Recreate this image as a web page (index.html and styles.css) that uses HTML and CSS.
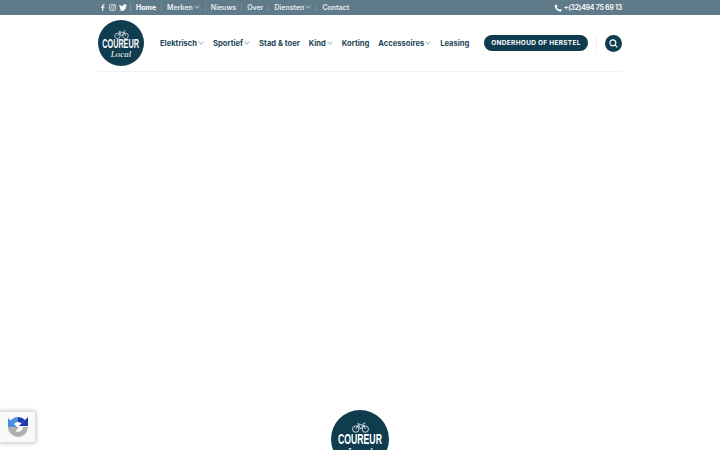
FILE: index.html
```html
<!DOCTYPE html>
<html>
<head>
    <title>Coureur Local</title>
    <link rel="stylesheet" href="styles.css">
</head>
<body>
    <div class="topbar">
        <div class="container topbar-row">
            <div class="social">
                <svg class="ico" width="4" height="7" viewBox="0 0 5 8"><path d="M1.400 8V4.400H.2V3h1.200V2C1.400.8 2.100.1 3.200.1c.5 0 1 0 1.100.1v1.200h-.7c-.6 0-.7.3-.7.7V3h1.400l-.2 1.400H2.900V8z" fill="#fff"/></svg>
                <svg class="ico" width="7" height="7" viewBox="0 0 8 8" fill="none" stroke="#fff" stroke-width=".8"><rect x=".5" y=".5" width="7" height="7" rx="2"/><circle cx="4" cy="4" r="1.600"/><circle cx="6" cy="2" r=".3"/></svg>
                <svg class="ico" width="8" height="7" viewBox="0 0 24 20"><path d="M24 2.400c-.9.400-1.800.7-2.800.8 1-.6 1.800-1.600 2.200-2.700-1 .6-2 1-3.100 1.200A4.900 4.900 0 0 0 11.900 6.200C7.800 6 4.200 4 1.700.9.400 3.100 1 6 3.200 7.500c-.8 0-1.600-.2-2.200-.6 0 2.300 1.600 4.400 3.900 4.900-.7.200-1.500.2-2.200.1.600 2 2.400 3.400 4.600 3.400A9.900 9.900 0 0 1 0 17.800 14 14 0 0 0 21.500 5.400c1-.7 1.800-1.600 2.500-3z" fill="#fff"/></svg>
            </div>
            <nav class="topnav">
                <a class="active">Home</a>
                <a>Merken<span class="chev"></span></a>
                <a>Nieuws</a>
                <a>Over</a>
                <a>Diensten<span class="chev"></span></a>
                <a>Contact</a>
            </nav>
            <div class="phone">
                <svg width="8" height="8" viewBox="0 0 24 24"><path d="M6.600 1.500 2.500 3C1 6 2.500 12 7 16.800s10.500 7 14.500 5.500l2-4.300-5.500-3.500-2.800 2.500c-2-.8-6-5-7-7.500L10.500 7z" fill="#fff"/></svg>
                <span>+(32)494 75 69 13</span>
            </div>
        </div>
    </div>

    <header class="container header">
        <div class="logo">
            <svg class="bike" width="15" height="9" viewBox="0 0 32 20" fill="none" stroke="#fff" stroke-width="1.500"><circle cx="7" cy="13" r="6"/><circle cx="25" cy="13" r="6"/><path d="M7 13 12 5h10l3 8M12 5l4 8 6-8M10 3h4M21 2h4"/></svg>
            <div class="logo-name">COUREUR</div>
            <div class="logo-sub">Local</div>
        </div>
        <nav class="mainnav">
            <a>Elektrisch<span class="chev dark"></span></a>
            <a>Sportief<span class="chev dark"></span></a>
            <a>Stad &amp; toer</a>
            <a>Kind<span class="chev dark"></span></a>
            <a>Korting</a>
            <a>Accessoires<span class="chev dark"></span></a>
            <a>Leasing</a>
        </nav>
        <a class="cta">ONDERHOUD OF HERSTEL</a>
        <span class="sep"></span>
        <a class="search">
            <svg width="9" height="9" viewBox="0 0 10 10" fill="none" stroke="#fff" stroke-width="1.300"><circle cx="4.300" cy="4.300" r="3.300"/><path d="m6.800 6.800 2.600 2.600"/></svg>
        </a>
    </header>

    <main class="content"></main>

    <footer class="footer">
        <div class="logo logo-big">
            <svg class="bike" width="17" height="11" viewBox="0 0 32 20" fill="none" stroke="#fff" stroke-width="1.500"><circle cx="7" cy="13" r="6"/><circle cx="25" cy="13" r="6"/><path d="M7 13 12 5h10l3 8M12 5l4 8 6-8M10 3h4M21 2h4"/></svg>
            <div class="logo-name">COUREUR</div>
            <div class="logo-sub">Local</div>
        </div>
    </footer>

    <div class="recaptcha">
        <svg width="20" height="20" viewBox="0 0 20 20" fill="none" stroke-width="5">
            <path d="M10 2.500A7.500 7.500 0 0 1 15.300 4.700" stroke="#1c3aa9"/>
            <path d="M20 0v9h-9z" fill="#1c3aa9" stroke="none"/>
            <path d="M10 2.500A7.500 7.500 0 0 0 2.500 10" stroke="#4a90e2"/>
            <path d="M0 1v9h9z" fill="#4a90e2" stroke="none"/>
            <path d="M2.500 10A7.500 7.500 0 0 0 17.500 10" stroke="#b0b0b0"/>
            <path d="M3 10h8l-4 5z" fill="#b0b0b0" stroke="none"/>
        </svg>
    </div>
</body>
</html>
```

FILE: styles.css
```css
html, body { margin: 0; height: 450px; overflow: hidden; }
body { font-family: Inter, "Liberation Sans", sans-serif; background: #fff; color: #1b4455; }
a { display: block; }
.container { width: 524px; margin: 0 auto; }

.topbar { background: #5f7a88; height: 15px; }
.topbar-row { display: flex; align-items: center; height: 15px; color: #fff; font-size: 7px; font-weight: 600; }
.social { display: flex; align-items: center; gap: 3.500px; margin-left: 3px; padding-right: 3px; border-right: 1px solid #7b929e; height: 9px; }
.ico { display: block; }
.topnav { display: flex; align-items: center; }
.topnav a { padding: 0 5px; border-left: 1px solid #718a97; color: #e6ecef; line-height: 9px; white-space: nowrap; }
.topnav a:first-child { border-left: 0; }
.topnav .active { color: #fff; font-weight: 700; }
.chev { display: inline-block; width: 3px; height: 3px; border-right: 1px solid #a9bac3; border-bottom: 1px solid #a9bac3; transform: rotate(45deg); margin: 0 1px 2px 2px; }
.chev.dark { border-color: #b5bfc5; }
.phone { margin-left: auto; display: flex; align-items: center; gap: 2px; white-space: nowrap; letter-spacing: -.25px; }

.header { display: flex; align-items: center; height: 56px; border-bottom: 1px solid #f1f1f1; }
.logo { width: 46px; height: 46px; border-radius: 50%; background: #0f3c4f; color: #fff; display: flex; flex-direction: column; align-items: center; padding-top: 10px; box-sizing: border-box; overflow: hidden; flex: none; }
.bike { display: block; flex: none; }
.logo-name { font-family: "Liberation Sans", sans-serif; font-size: 12.500px; font-weight: 700; line-height: 10px; transform: scaleX(.58); white-space: nowrap; }
.logo-sub { font-family: "Liberation Serif", serif; font-style: italic; font-size: 9px; line-height: 9px; margin-top: 1px; }

.mainnav { display: flex; margin-left: 16px; gap: 9px; font-size: 7.600px; font-weight: 700; white-space: nowrap; }
.cta { margin-left: auto; background: #0f3c4f; color: #fff; border-radius: 8px; height: 16px; line-height: 16px; width: 104px; text-align: center; font-size: 6.500px; font-weight: 700; letter-spacing: .3px; white-space: nowrap; flex: none; }
.sep { width: 1px; height: 15px; background: #f0f0f0; margin: 0 8px; flex: none; }
.search { width: 17px; height: 17px; border-radius: 50%; background: #0f3c4f; display: flex; align-items: center; justify-content: center; flex: none; }

.content { height: 338px; }
.footer { display: flex; justify-content: center; }
.logo-big { width: 58px; height: 58px; padding-top: 12px; }
.logo-big .logo-name { font-size: 15px; line-height: 12px; }
.logo-big .logo-sub { font-size: 11px; line-height: 11px; margin-top: 1px; }

.recaptcha { position: fixed; left: 0; bottom: 7px; width: 35px; height: 30px; background: #f9f9f9; border: 1px solid #dcdcdc; border-left: 0; border-radius: 0 2px 2px 0; box-shadow: 0 0 4px #bbb; display: flex; align-items: center; justify-content: center; }
```
